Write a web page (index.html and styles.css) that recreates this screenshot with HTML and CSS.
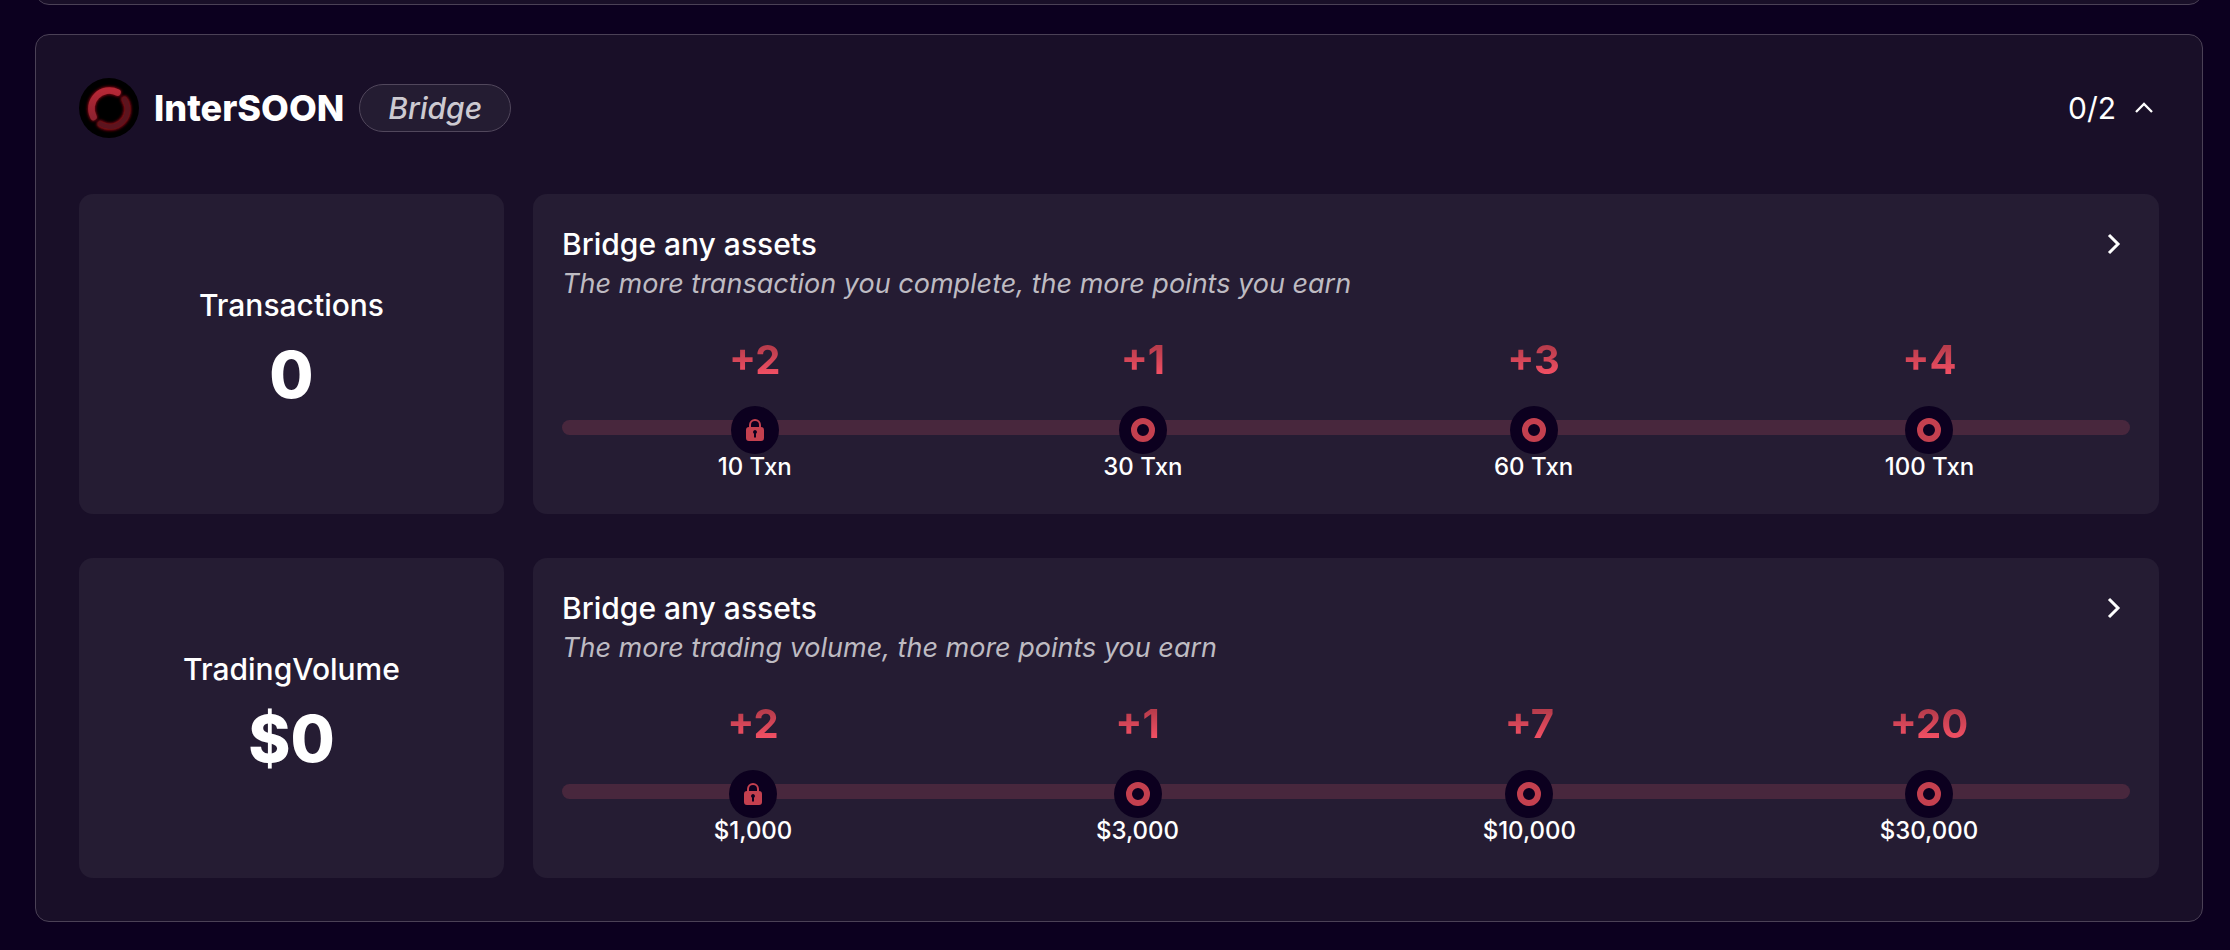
FILE: index.html
```html
<!DOCTYPE html>
<html lang="en">
<head>
<meta charset="utf-8">
<meta name="viewport" content="width=device-width, initial-scale=1">
<title>InterSOON quests</title>
<link rel="stylesheet" href="styles.css">
</head>
<body>
<svg class="sprite" aria-hidden="true">
  <symbol id="lock" viewBox="0 0 24 24">
    <path d="M7 10V7a5 5 0 0 1 10 0v3" fill="none" stroke="currentColor" stroke-width="2"/>
    <path fill="currentColor" fill-rule="evenodd" d="M6 9h12a3 3 0 0 1 3 3v8a3 3 0 0 1-3 3H6a3 3 0 0 1-3-3v-8a3 3 0 0 1 3-3zm6 3a2 2 0 0 0-1 3.700V19.500h2v-3.800A2 2 0 0 0 12 12z"/>
  </symbol>
  <symbol id="ring" viewBox="0 0 24 24">
    <circle cx="12" cy="12" r="9" fill="none" stroke="currentColor" stroke-width="6"/>
  </symbol>
  <symbol id="chevron-right" viewBox="0 0 24 24">
    <path d="M7 3l9 9-9 9" fill="none" stroke="currentColor" stroke-width="3"/>
  </symbol>
  <symbol id="chevron-up" viewBox="0 0 24 24">
    <path d="M4 16l8-8 8 8" fill="none" stroke="currentColor" stroke-width="2.300"/>
  </symbol>
</svg>
<main class="page">
  <div class="panel panel-previous"></div>
  <section class="panel">
    <header class="panel-head">
      <svg class="logo" viewBox="0 0 60 60" aria-hidden="true">
        <defs>
          <filter id="glow" x="-30%" y="-30%" width="160%" height="160%"><feGaussianBlur stdDeviation="1.600"/></filter>
          <linearGradient id="arc" x1="0" y1="0" x2="0" y2="1"><stop offset="0" stop-color="#b52836"/><stop offset="1" stop-color="#8f2230"/></linearGradient>
        </defs>
        <circle cx="30" cy="30" r="30" fill="#000"/>
        <g fill="none" stroke="#a00f16" stroke-linecap="round" filter="url(#glow)">
          <path d="M14.500 39A18 18 0 0 1 38.500 14.500" stroke-width="7.500"/>
          <path d="M45.500 21.500A17.500 17.500 0 0 1 21.500 46" stroke-width="7"/>
        </g>
        <path d="M14.500 39A18 18 0 0 1 38.500 14.500" fill="none" stroke="url(#arc)" stroke-width="6.500" stroke-linecap="round"/>
        <path d="M45.500 21.500A17.500 17.500 0 0 1 21.500 46" fill="none" stroke="#5c141e" stroke-width="5" stroke-linecap="round"/>
      </svg>
      <h1 class="name">InterSOON</h1>
      <span class="tag">Bridge</span>
      <button class="toggle" type="button" aria-expanded="true">0/2
        <svg class="toggle-icon" aria-hidden="true"><use href="#chevron-up"/></svg>
      </button>
    </header>
    <div class="quests">
      <article class="quest">
        <div class="card stat">
          <h2 class="stat-label">Transactions</h2>
          <p class="stat-value">0</p>
        </div>
        <div class="card task">
          <div class="task-head">
            <h3 class="task-title">Bridge any assets</h3>
            <a class="task-link" href="#" aria-label="Open task"><svg class="task-icon" aria-hidden="true"><use href="#chevron-right"/></svg></a>
          </div>
          <p class="task-note">The more transaction you complete, the more points you earn</p>
          <div class="scale">
            <div class="track"></div>
            <ol class="steps">
              <li class="step"><strong class="points">+2</strong><span class="dot"><svg class="dot-icon"><use href="#lock"/></svg></span><span class="goal">10 Txn</span></li>
              <li class="step"><strong class="points">+1</strong><span class="dot"><svg class="dot-icon"><use href="#ring"/></svg></span><span class="goal">30 Txn</span></li>
              <li class="step"><strong class="points">+3</strong><span class="dot"><svg class="dot-icon"><use href="#ring"/></svg></span><span class="goal">60 Txn</span></li>
              <li class="step"><strong class="points">+4</strong><span class="dot"><svg class="dot-icon"><use href="#ring"/></svg></span><span class="goal">100 Txn</span></li>
            </ol>
          </div>
        </div>
      </article>
      <article class="quest">
        <div class="card stat">
          <h2 class="stat-label">TradingVolume</h2>
          <p class="stat-value">$0</p>
        </div>
        <div class="card task">
          <div class="task-head">
            <h3 class="task-title">Bridge any assets</h3>
            <a class="task-link" href="#" aria-label="Open task"><svg class="task-icon" aria-hidden="true"><use href="#chevron-right"/></svg></a>
          </div>
          <p class="task-note">The more trading volume, the more points you earn</p>
          <div class="scale">
            <div class="track"></div>
            <ol class="steps">
              <li class="step"><strong class="points">+2</strong><span class="dot"><svg class="dot-icon"><use href="#lock"/></svg></span><span class="goal">$1,000</span></li>
              <li class="step"><strong class="points">+1</strong><span class="dot"><svg class="dot-icon"><use href="#ring"/></svg></span><span class="goal">$3,000</span></li>
              <li class="step"><strong class="points">+7</strong><span class="dot"><svg class="dot-icon"><use href="#ring"/></svg></span><span class="goal">$10,000</span></li>
              <li class="step"><strong class="points">+20</strong><span class="dot"><svg class="dot-icon"><use href="#ring"/></svg></span><span class="goal">$30,000</span></li>
            </ol>
          </div>
        </div>
      </article>
    </div>
  </section>
</main>
</body>
</html>
```

FILE: styles.css
```css
* {
  box-sizing: border-box;
}

body,
h1,
h2,
h3,
p,
ol {
  margin: 0;
  padding: 0;
}

body {
  background: #0c001f;
  color: #fff;
  font-family: Inter, "Open Sans", sans-serif;
}

.sprite {
  position: absolute;
  width: 0;
  height: 0;
}

.page {
  display: flex;
  flex-direction: column;
  gap: 29px;
  padding: 0 27px 28px 35px;
}

.panel {
  padding: 43px;
  border: 1px solid #4b4156;
  border-radius: 14px;
  background: #190f28;
}

.panel-previous {
  height: 40px;
  margin-top: -35px;
  padding: 0;
}

.panel-head {
  display: flex;
  align-items: center;
  gap: 15px;
  height: 60px;
  margin-bottom: 56px;
}

.logo {
  width: 60px;
  height: 60px;
}

.name {
  font-size: 36px;
  line-height: 48px;
  font-weight: 800;
}

.tag {
  padding: 0 28px;
  border: 1px solid #51475c;
  border-radius: 24px;
  background: #241c32;
  color: #cdcad1;
  font-size: 30px;
  line-height: 46px;
  font-style: italic;
  font-weight: 500;
}

.toggle {
  display: flex;
  align-items: center;
  gap: 16px;
  margin-left: auto;
  padding: 0 3px 0 0;
  border: 0;
  background: none;
  color: #fff;
  font: 400 30px/48px Inter, "Open Sans", sans-serif;
}

.toggle-icon {
  width: 24px;
  height: 24px;
}

.quests {
  display: grid;
  gap: 44px;
}

.quest {
  display: grid;
  grid-template-columns: 425fr 1626fr;
  gap: 29px;
}

.card {
  border-radius: 14px;
  background: #251c33;
}

.stat {
  display: flex;
  flex-direction: column;
  align-items: center;
  justify-content: center;
  gap: 12px;
  padding-bottom: 14px;
}

.stat-label {
  font-size: 30px;
  line-height: 44px;
  font-weight: 500;
}

.stat-value {
  font-size: 64px;
  line-height: 72px;
  font-weight: 800;
}

.task {
  padding: 29px 29px 34px;
}

.task-head {
  display: flex;
  align-items: center;
  justify-content: space-between;
}

.task-title {
  font-size: 30px;
  line-height: 42px;
  font-weight: 500;
}

.task-link {
  display: flex;
  margin-right: 4px;
  color: #fff;
}

.task-icon {
  width: 24px;
  height: 24px;
}

.task-note {
  margin-bottom: 35px;
  color: #bebbc2;
  font-size: 27px;
  line-height: 38px;
  font-style: italic;
}

.scale {
  display: grid;
}

.track,
.steps {
  grid-area: 1 / 1;
}

.track {
  height: 15px;
  margin-top: 82px;
  border-radius: 8px;
  background: #48273d;
}

.steps {
  display: flex;
  justify-content: space-around;
  list-style: none;
}

.step {
  display: flex;
  flex-direction: column;
  align-items: center;
}

.points {
  margin-bottom: 24px;
  background: linear-gradient(#b83c4c 20%, #f04f63 80%);
  background-clip: text;
  -webkit-background-clip: text;
  color: transparent;
  font-size: 40px;
  line-height: 44px;
  font-weight: 700;
}

.dot {
  display: grid;
  place-items: center;
  width: 48px;
  height: 48px;
  border-radius: 50%;
  background: #0c001f;
  color: #c4404f;
}

.dot-icon {
  width: 24px;
  height: 24px;
}

.goal {
  font-size: 24px;
  line-height: 26px;
  font-weight: 500;
}
```
